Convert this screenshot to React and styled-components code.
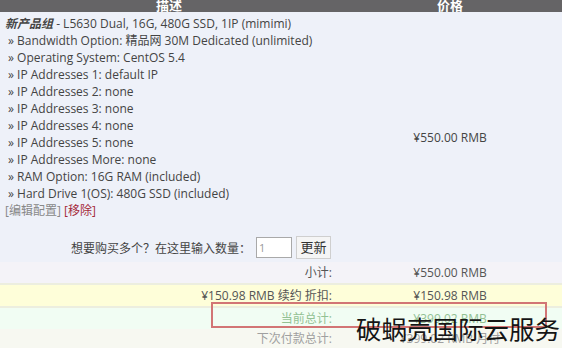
import React from 'react';
import styled, { createGlobalStyle } from 'styled-components';

const GlobalStyle = createGlobalStyle`
  html, body {
    margin: 0;
    padding: 0;
    background: #f7f8f1;
  }
  body {
    font-family: "Open Sans", "Noto Sans CJK SC", sans-serif;
    font-size: 12px;
    color: #444;
  }
`;

const Page = styled.div`
  position: relative;
  width: 562px;
  height: 348px;
  overflow: hidden;
  background: #eceedf;
`;

const HeaderRow = styled.div`
  display: grid;
  grid-template-columns: 338px 1fr;
  height: 12px;
  background: #656466;
  color: #fff;
  font-weight: bold;
  font-size: 13px;
`;

const HeaderCell = styled.div`
  text-align: center;
  line-height: 10px;
  overflow: hidden;
`;

const ItemRow = styled.div`
  display: grid;
  grid-template-columns: 338px 1fr;
  height: 250px;
  background: #eef1f9;
`;

const DescCell = styled.div`
  padding: 3px 7px 0 5px;
`;

const Line = styled.div`
  line-height: 17px;
  height: 17px;
  white-space: nowrap;
  padding-left: ${(p) => (p.$indent ? '3px' : '0')};
`;

const GroupName = styled.b`
  font-style: italic;
`;

const EditLink = styled.span`
  color: #888;
`;

const RemoveLink = styled.span`
  color: #a52a3a;
`;

const QtyForm = styled.div`
  display: flex;
  justify-content: flex-end;
  align-items: center;
  gap: 4px;
  margin-top: 17px;
  height: 23px;
`;

const QtyText = styled.span`
  margin-right: 1px;
`;

const QtyInput = styled.div`
  width: 32px;
  height: 19px;
  background: #fff;
  border: 1px solid #a9a9a9;
  color: #999;
  font-size: 11px;
  line-height: 19px;
  padding-left: 2px;
  box-sizing: content-box;
`;

const UpdateButton = styled.div`
  width: 33px;
  height: 21px;
  background: #f5f5f5;
  border: 1px solid #cfcfcf;
  font-size: 13px;
  color: #333;
  line-height: 21px;
  text-align: center;
`;

const PriceCell = styled.div`
  display: flex;
  align-items: center;
  justify-content: center;
  color: #444;
`;

const SummaryRow = styled.div`
  display: grid;
  grid-template-columns: 338px 1fr;
  height: ${(p) => p.$h}px;
  line-height: ${(p) => p.$h}px;
  margin-bottom: ${(p) => p.$gap}px;
  background: ${(p) => p.$bg};
  color: ${(p) => p.$color || '#555'};
`;

const SummaryLabel = styled.div`
  text-align: right;
  padding-right: 6px;
  white-space: nowrap;
`;

const SummaryValue = styled.div`
  text-align: center;
  white-space: nowrap;
`;

const HighlightBox = styled.div`
  position: absolute;
  left: 211px;
  top: 302px;
  width: 332px;
  height: 22px;
  border: 2px solid #d27575;
`;

const Watermark = styled.div`
  position: absolute;
  left: 356px;
  top: 313px;
  font-family: "Noto Sans CJK SC", sans-serif;
  font-size: 25.5px;
  line-height: 30px;
  color: #151515;
  white-space: nowrap;
`;

const options = [
  'Bandwidth Option: 精品网 30M Dedicated (unlimited)',
  'Operating System: CentOS 5.4',
  'IP Addresses 1: default IP',
  'IP Addresses 2: none',
  'IP Addresses 3: none',
  'IP Addresses 4: none',
  'IP Addresses 5: none',
  'IP Addresses More: none',
  'RAM Option: 16G RAM (included)',
  'Hard Drive 1(OS): 480G SSD (included)',
];

const totals = [
  { label: '小计:', value: '¥550.00 RMB', bg: '#f4f3f8', h: 21, gap: 2 },
  { label: '¥150.98 RMB 续约 折扣:', value: '¥150.98 RMB', bg: '#fefed9', h: 21, gap: 2 },
  { label: '当前总计:', value: '¥399.02 RMB', bg: '#f1fdf3', color: '#93c193', h: 21, gap: 0 },
  { label: '下次付款总计:', value: '¥399.02 RMB 月付', bg: '#f7f8f1', color: '#a0a0a0', h: 20, gap: 0 },
];

const App = () => {
  return (
    <>
      <GlobalStyle />
      <Page>
        <HeaderRow>
          <HeaderCell>描述</HeaderCell>
          <HeaderCell>价格</HeaderCell>
        </HeaderRow>

        <ItemRow>
          <DescCell>
            <Line>
              <GroupName>新产品组</GroupName> - L5630 Dual, 16G, 480G SSD, 1IP (mimimi)
            </Line>
            {options.map((opt) => (
              <Line $indent key={opt}>» {opt}</Line>
            ))}
            <Line>
              <EditLink>[编辑配置]</EditLink> <RemoveLink>[移除]</RemoveLink>
            </Line>
            <QtyForm>
              <QtyText>想要购买多个？在这里输入数量：</QtyText>
              <QtyInput>1</QtyInput>
              <UpdateButton>更新</UpdateButton>
            </QtyForm>
          </DescCell>
          <PriceCell>¥550.00 RMB</PriceCell>
        </ItemRow>

        {totals.map((t) => (
          <SummaryRow key={t.label} $bg={t.bg} $color={t.color} $h={t.h} $gap={t.gap}>
            <SummaryLabel>{t.label}</SummaryLabel>
            <SummaryValue>{t.value}</SummaryValue>
          </SummaryRow>
        ))}

        <HighlightBox />
        <Watermark>破蜗壳国际云服务</Watermark>
      </Page>
    </>
  );
};

export default App;
